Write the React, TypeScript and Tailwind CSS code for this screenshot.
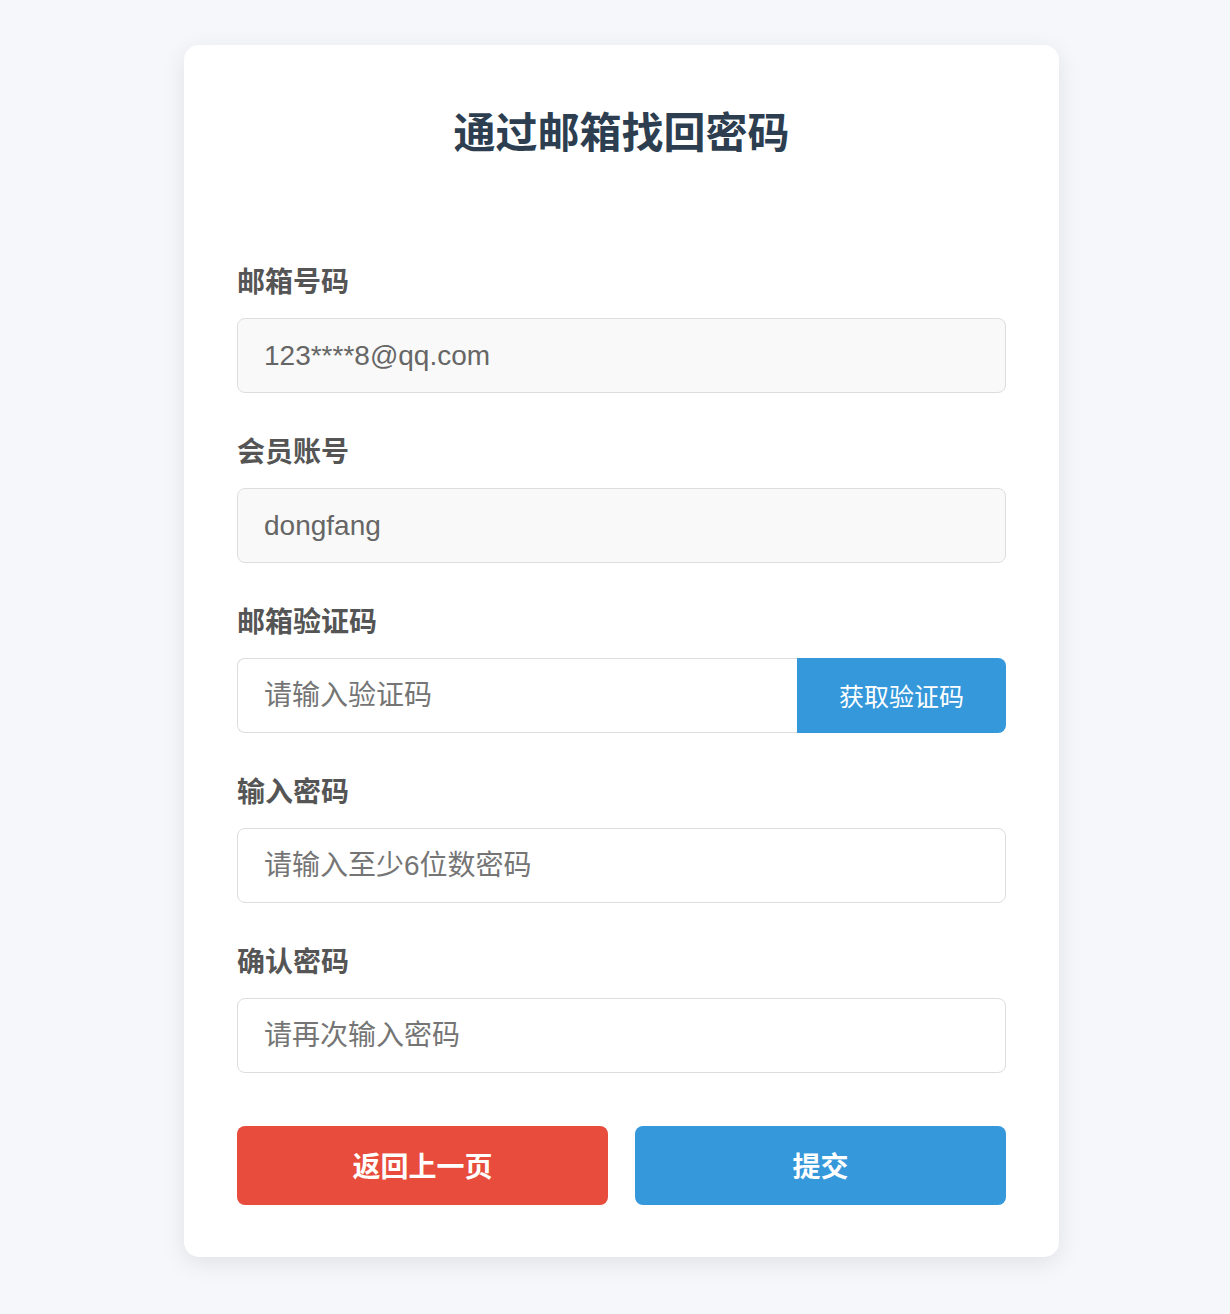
import React, { useState } from 'react';

const FONT = '"Liberation Sans", "Noto Sans CJK SC", sans-serif';

const Field: React.FC<{ label: string; children: React.ReactNode; first?: boolean }> = ({ label, children, first }) => (
    <div className={first ? '' : 'mt-[40px]'}>
        <label className="block h-[40px] text-[28px] leading-[40px] font-bold text-[#555555]">{label}</label>
        <div className="mt-[15px]">{children}</div>
    </div>
);

const App: React.FC = () => {
    const [code, setCode] = useState('');
    const [pwd, setPwd] = useState('');
    const [pwd2, setPwd2] = useState('');

    const inputCls =
        'block w-full h-[75px] px-[26px] text-[28px] border border-[#dddddd] rounded-[8px] outline-none placeholder:text-[#757575] text-[#333333]';

    return (
        <div className="min-h-[1314px] bg-[#f5f7fa] pt-[45px] pl-[13px]" style={{ fontFamily: FONT }}>
            <div className="mx-auto w-[875px] bg-white rounded-[15px] shadow-[0_6px_24px_rgba(0,0,0,0.09)] px-[53px] pt-[59px] pb-[52px]">
                <h1 className="text-center text-[42px] leading-[60px] font-bold text-[#2c3e50]">通过邮箱找回密码</h1>

                <div className="mt-[99px]">
                    <Field label="邮箱号码" first>
                        <input
                            className={inputCls + ' bg-[#f9f9f9] !text-[#666666]'}
                            value="123****8@qq.com"
                            readOnly
                            style={{ fontFamily: FONT }}
                        />
                    </Field>
                    <Field label="会员账号">
                        <input
                            className={inputCls + ' bg-[#f9f9f9] !text-[#666666]'}
                            value="dongfang"
                            readOnly
                            style={{ fontFamily: FONT }}
                        />
                    </Field>
                    <Field label="邮箱验证码">
                        <div className="flex">
                            <input
                                className="block flex-1 min-w-0 h-[75px] px-[26px] text-[28px] bg-white border border-[#dddddd] border-r-0 rounded-l-[8px] outline-none placeholder:text-[#757575] text-[#333333]"
                                placeholder="请输入验证码"
                                value={code}
                                onChange={(e) => setCode(e.target.value)}
                                style={{ fontFamily: FONT }}
                            />
                            <button className="w-[209px] h-[75px] pt-[4px] bg-[#3498db] text-white text-[25px] rounded-r-[8px]">
                                获取验证码
                            </button>
                        </div>
                    </Field>
                    <Field label="输入密码">
                        <input
                            type="password"
                            className={inputCls + ' bg-white'}
                            placeholder="请输入至少6位数密码"
                            value={pwd}
                            onChange={(e) => setPwd(e.target.value)}
                            style={{ fontFamily: FONT }}
                        />
                    </Field>
                    <Field label="确认密码">
                        <input
                            type="password"
                            className={inputCls + ' bg-white'}
                            placeholder="请再次输入密码"
                            value={pwd2}
                            onChange={(e) => setPwd2(e.target.value)}
                            style={{ fontFamily: FONT }}
                        />
                    </Field>
                </div>

                <div className="mt-[53px] flex gap-[27px]">
                    <button className="flex-1 h-[79px] pt-[5px] rounded-[8px] bg-[#e74c3c] text-white text-[28px] font-bold">
                        返回上一页
                    </button>
                    <button className="flex-1 h-[79px] pt-[5px] rounded-[8px] bg-[#3498db] text-white text-[28px] font-bold">
                        提交
                    </button>
                </div>
            </div>
        </div>
    );
};

export default App;
